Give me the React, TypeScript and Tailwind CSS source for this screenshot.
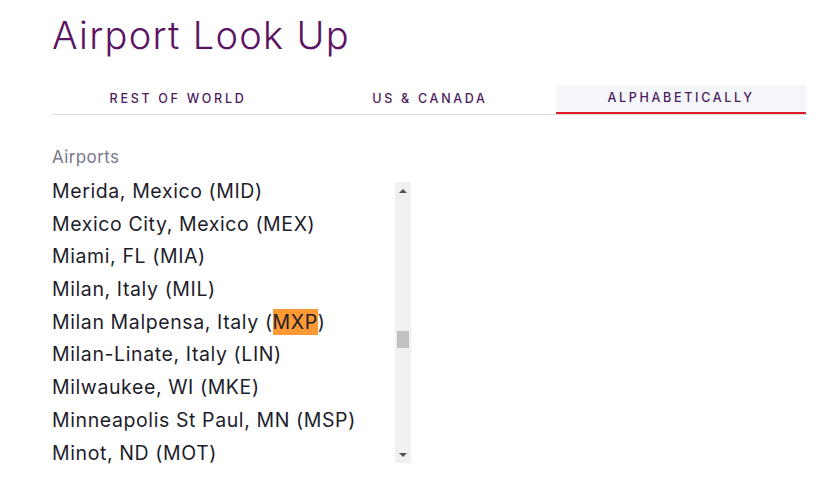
import React from "react";

const airports = [
  "Merida, Mexico (MID)",
  "Mexico City, Mexico (MEX)",
  "Miami, FL (MIA)",
  "Milan, Italy (MIL)",
  "Milan Malpensa, Italy (MXP)",
  "Milan-Linate, Italy (LIN)",
  "Milwaukee, WI (MKE)",
  "Minneapolis St Paul, MN (MSP)",
  "Minot, ND (MOT)",
];

const tabs = ["REST OF WORLD", "US & CANADA", "ALPHABETICALLY"];

function Item({ name }: { name: string }) {
  if (name.includes("(MXP)")) {
    return (
      <li className="h-[32.7px] leading-[32.7px] whitespace-nowrap">
        Milan Malpensa, Italy (<span className="bg-[#ff9933] py-[1px]">MXP</span>)
      </li>
    );
  }
  return <li className="h-[32.7px] leading-[32.7px] whitespace-nowrap">{name}</li>;
}

export default function App() {
  return (
    <main className="w-[825px] h-[497px] bg-white pl-[52px] pr-[17px] font-['Inter',sans-serif]">
      <h1 className="pt-[12px] text-[38px] leading-[46px] font-light text-[#5b1462] tracking-[1.3px]">
        Airport Look Up
      </h1>

      <nav className="mt-[27px] grid grid-cols-3 border-b border-[#dcdcdc] w-[756px]">
        {tabs.map((t, i) => (
          <div
            key={t}
            className={
              i === 2
                ? "h-[29px] bg-[#f5f6fa] border-b-2 border-[#e01a2b] -mb-px mr-[2px] flex items-center justify-center text-[12.5px] font-medium tracking-[2.7px] text-[#4b1a5c]"
                : "h-[29px] flex items-center justify-center text-[12.5px] font-medium tracking-[2.7px] text-[#4b1a5c]"
            }
          >
            {t}
          </div>
        ))}
      </nav>

      <p className="mt-[31px] text-[17px] leading-[22px] text-[#77778a] tracking-[0.4px]">Airports</p>

      <div className="mt-[14px] flex w-[359px] h-[281px]">
        <div className="flex-1">
          <ul className="-mt-[7px] text-[19.5px] text-[#1d1d2b] tracking-[0.6px]">
            {airports.map((a) => (
              <Item key={a} name={a} />
            ))}
          </ul>
        </div>
        <div className="w-[16px] bg-[#f0f0f0] flex flex-col items-center">
          <div className="h-[17px] flex items-center justify-center">
            <div className="w-0 h-0 border-l-[4px] border-r-[4px] border-b-[4px] border-l-transparent border-r-transparent border-b-[#505050]" />
          </div>
          <div className="flex-1 w-full px-[2px] pt-[132px]">
            <div className="h-[17px] bg-[#c1c1c1]" />
          </div>
          <div className="h-[17px] flex items-center justify-center">
            <div className="w-0 h-0 border-l-[4px] border-r-[4px] border-t-[4px] border-l-transparent border-r-transparent border-t-[#505050]" />
          </div>
        </div>
      </div>
    </main>
  );
}
